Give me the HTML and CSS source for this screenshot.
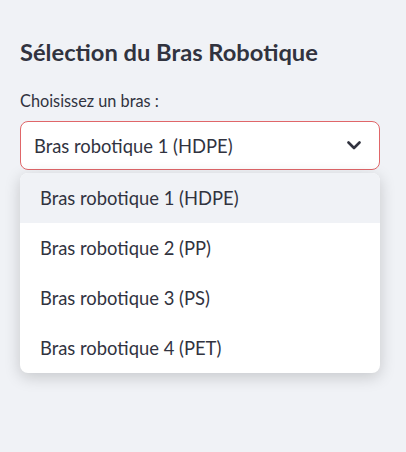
FILE: index.html
```html
<!DOCTYPE html>
<html lang="fr">
<head>
<meta charset="utf-8">
<link rel="stylesheet" href="styles.css">
</head>
<body>
<div class="sidebar">
  <h2 class="title">Sélection du Bras Robotique</h2>
  <div class="field">
    <label class="label">Choisissez un bras :</label>
    <div class="select-wrap">
      <div class="select">
        <span class="select-value">Bras robotique 1 (HDPE)</span>
        <svg class="chevron" width="14" height="9" viewBox="0 0 14 9"><path d="M1.5 1.5 L7 7 L12.5 1.5" fill="none" stroke="#31333f" stroke-width="2.6" stroke-linecap="round" stroke-linejoin="round"/></svg>
      </div>
      <ul class="menu">
        <li class="option active">Bras robotique 1 (HDPE)</li>
        <li class="option">Bras robotique 2 (PP)</li>
        <li class="option">Bras robotique 3 (PS)</li>
        <li class="option">Bras robotique 4 (PET)</li>
      </ul>
    </div>
  </div>
</div>
</body>
</html>
```
FILE: styles.css
```css
html, body {
  margin: 0;
  padding: 0;
  background: #f0f2f6;
  width: 406px;
  height: 452px;
  overflow: hidden;
}
body {
  font-family: "Lato", "Noto Sans", sans-serif;
  color: #31333f;
}
.sidebar {
  padding: 36px 26px 0 20px;
}
.title {
  margin: 0;
  font-size: 23.7px;
  font-weight: 700;
  line-height: 32px;
}
.field {
  margin-top: 23px;
}
.label {
  display: block;
  font-size: 16.3px;
  line-height: 20px;
  margin-bottom: 10px;
}
.select-wrap {
  position: relative;
}
.select {
  box-sizing: border-box;
  height: 49px;
  background: #fff;
  border: 1px solid #e06669;
  border-radius: 8px;
  display: flex;
  align-items: center;
  justify-content: space-between;
  padding: 0 18px 0 13px;
}
.select-value {
  font-size: 18.4px;
}
.chevron {
  display: block;
}
.menu {
  position: absolute;
  left: 0;
  right: 0;
  top: 52px;
  margin: 0;
  padding: 0;
  list-style: none;
  background: #fff;
  border-radius: 8px;
  overflow: hidden;
  box-shadow: 0 4px 16px rgba(0, 0, 0, 0.18);
}
.option {
  height: 50px;
  display: flex;
  align-items: center;
  padding-left: 20px;
  font-size: 18.4px;
}
.option.active {
  background: #f0f2f6;
}
```
